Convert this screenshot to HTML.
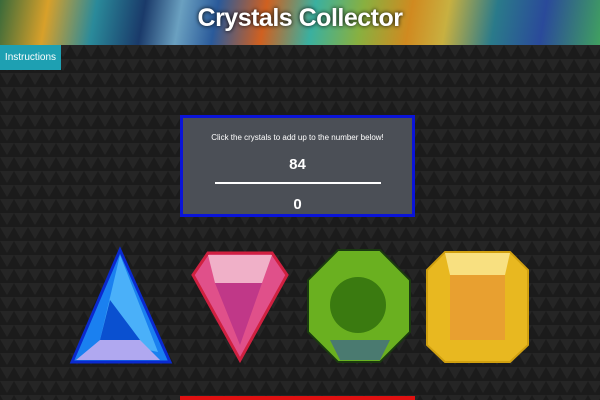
<!DOCTYPE html>
<html><head><meta charset="utf-8"><style>
body{margin:0;width:600px;height:400px;overflow:hidden;background:#1b1b1b;font-family:"Liberation Sans",sans-serif;position:relative}
.bg{position:absolute;left:0;top:45px}
.hdr{position:absolute;left:0;top:0;width:600px;height:45px;overflow:hidden;
background:linear-gradient(100deg,#3a6a3a 0%,#d8a02a 8%,#2a8a9a 16%,#1a3a6a 24%,#6aa0c0 30%,#2a5a9a 36%,#d06020 44%,#3ab0a0 52%,#88b040 60%,#d08a20 68%,#c8b040 74%,#2a7a8a 82%,#2a4a9a 90%,#40a060 100%)}
.hdr h1{position:absolute;left:0;right:0;top:4px;margin:0;text-align:center;color:#fff;font-size:25px;font-weight:bold;text-shadow:0 0 4px #000;letter-spacing:-0.5px}
.btn{position:absolute;left:0;top:45px;width:61px;height:25px;background:#1ea0b2;color:#fff;font-size:10px;line-height:25px;text-align:center}
.box{position:absolute;left:180px;top:115px;width:229px;height:96px;border:3px solid #0a14d8;background:#4b4f56}
.box p{margin:0;text-align:center;color:#fff}
</style></head><body>
<svg class="bg" width="600" height="355"><defs><pattern id="p" width="14" height="14" patternUnits="userSpaceOnUse"><path d="M0 0H14L7 12Z" fill="#252525"/></pattern></defs><rect width="600" height="355" fill="url(#p)"/></svg>
<div class="hdr"><h1>Crystals Collector</h1></div>
<div class="btn">Instructions</div>
<div class="box">
<p style="font-size:8px;margin-top:15px">Click the crystals to add up to the number below!</p>
<p style="font-size:15px;font-weight:bold;margin-top:14px">84</p>
<div style="margin:9px auto 0;width:166px;height:2px;background:#fff"></div>
<p style="font-size:15px;font-weight:bold;margin-top:12px">0</p>
</div>
<svg style="position:absolute;left:0;top:0" width="600" height="400">
<polygon points="120,250 170,362 72,362" fill="#1a80f0" stroke="#0a2ad0" stroke-width="3"/>
<polygon points="120,255 100,340 158,352" fill="#6ad0ff" opacity=".6"/>
<polygon points="110,300 140,340 100,340" fill="#0a50d0"/>
<polygon points="76,360 160,360 140,340 100,340" fill="#b0a8f0"/>
<polygon points="208,253 272,253 287,275 240,360 193,275" fill="#e0508a" stroke="#d02040" stroke-width="3"/>
<polygon points="215,283 262,283 240,345" fill="#c03888"/>
<polygon points="208,255 272,255 262,283 215,283" fill="#f0b0c8"/>
<polygon points="338,250 380,250 410,280 410,332 380,362 338,362 308,332 308,280" fill="#6ab020" stroke="#1a3a10" stroke-width="2"/>
<circle cx="358" cy="305" r="28" fill="#3a7a10"/>
<polygon points="330,340 390,340 380,360 340,360" fill="#4a7a70"/>
<polygon points="445,252 510,252 528,270 528,345 510,362 445,362 427,345 427,270" fill="#e8b820" stroke="#d0a010" stroke-width="2"/>
<rect x="450" y="275" width="55" height="65" fill="#e8a030"/>
<polygon points="445,253 510,253 505,275 450,275" fill="#f8e080"/>
<rect x="180" y="396" width="235" height="4" fill="#e01010"/>
</svg>
</body></html>
